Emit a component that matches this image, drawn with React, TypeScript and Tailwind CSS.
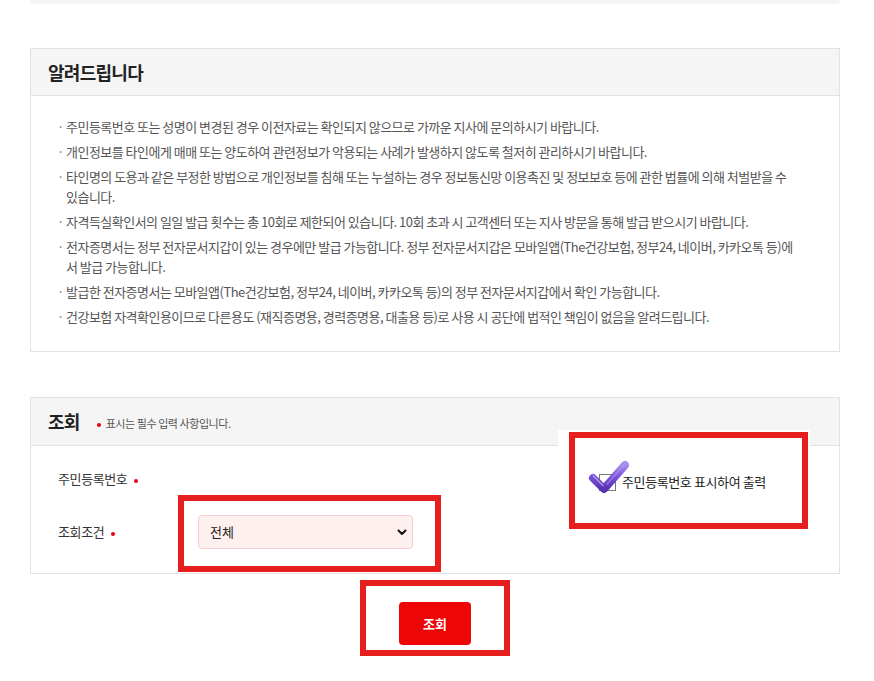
import { useState } from "react";

const notices: string[][] = [
  ["주민등록번호 또는 성명이 변경된 경우 이전자료는 확인되지 않으므로 가까운 지사에 문의하시기 바랍니다."],
  ["개인정보를 타인에게 매매 또는 양도하여 관련정보가 악용되는 사례가 발생하지 않도록 철저히 관리하시기 바랍니다."],
  [
    "타인명의 도용과 같은 부정한 방법으로 개인정보를 침해 또는 누설하는 경우 정보통신망 이용촉진 및 정보보호 등에 관한 법률에 의해 처벌받을 수",
    "있습니다.",
  ],
  ["자격득실확인서의 일일 발급 횟수는 총 10회로 제한되어 있습니다. 10회 초과 시 고객센터 또는 지사 방문을 통해 발급 받으시기 바랍니다."],
  [
    "전자증명서는 정부 전자문서지갑이 있는 경우에만 발급 가능합니다. 정부 전자문서지갑은 모바일앱(The건강보험, 정부24, 네이버, 카카오톡 등)에",
    "서 발급 가능합니다.",
  ],
  ["발급한 전자증명서는 모바일앱(The건강보험, 정부24, 네이버, 카카오톡 등)의 정부 전자문서지갑에서 확인 가능합니다."],
  ["건강보험 자격확인용이므로 다른용도 (재직증명용, 경력증명용, 대출용 등)로 사용 시 공단에 법적인 책임이 없음을 알려드립니다."],
];

function RequiredDot() {
  return <span className="inline-block w-[4px] h-[4px] rounded-full bg-[#e60012] ml-[7px] align-middle" />;
}

function PurpleCheck() {
  return (
    <svg width="44" height="38" viewBox="0 0 44 38" className="absolute left-[-13px] top-[-17px]">
      <defs>
        <linearGradient id="chk" x1="0" y1="0" x2="0" y2="1">
          <stop offset="0" stopColor="#a98ef2" />
          <stop offset="0.5" stopColor="#7850d6" />
          <stop offset="1" stopColor="#5a33b3" />
        </linearGradient>
      </defs>
      <path d="M6 20 L17 31 L38 7" fill="none" stroke="url(#chk)" strokeWidth="8" strokeLinecap="round" strokeLinejoin="round" />
      <path d="M6.5 18 L16 27.5" fill="none" stroke="#cbbcf8" strokeWidth="1.5" strokeLinecap="round" opacity="0.7" />
      <path d="M20 26 L36.5 7.5" fill="none" stroke="#b9a4f4" strokeWidth="1.5" strokeLinecap="round" opacity="0.5" />
    </svg>
  );
}

export default function App() {
  const [cond, setCond] = useState("all");
  const [showRrn, setShowRrn] = useState(true);

  return (
    <div className="relative w-[874px] h-[681px] overflow-hidden bg-white font-['Noto_Sans_CJK_KR',sans-serif] text-[#222]">
      <div className="ml-[30px] w-[810px] h-[4px] rounded-b-[6px] bg-[#f4f4f4]" />

      {/* 알려드립니다 */}
      <section className="ml-[30px] w-[810px] mt-[44px] border border-[#e2e2e2]">
        <div className="h-[47px] bg-[#f5f5f5] border-b border-[#e2e2e2] flex items-center pl-[17px]">
          <h2 className="text-[18px] font-bold tracking-[-0.04em] text-[#222]">알려드립니다</h2>
        </div>
        <ul className="pt-[21px] pb-[24px] pl-[26px] pr-[10px] flex flex-col gap-[5px]">
          {notices.map((lines, i) => (
            <li key={i} className="flex text-[13px] leading-[20px] tracking-[-0.04em] text-[#555]">
              <span className="w-[9px] shrink-0 text-[#777]">·</span>
              <span>
                {lines.map((l, j) => (
                  <span key={j} className="block whitespace-nowrap">
                    {l}
                  </span>
                ))}
              </span>
            </li>
          ))}
        </ul>
      </section>

      {/* 조회 */}
      <section className="ml-[30px] w-[810px] mt-[45px] border border-[#e2e2e2]">
        <div className="h-[48px] bg-[#f5f5f5] border-b border-[#e2e2e2] flex items-center pl-[17px]">
          <h2 className="text-[18px] font-bold tracking-[-0.04em] text-[#222]">조회</h2>
          <span className="w-[4px] h-[4px] rounded-full bg-[#e60012] ml-[17px] mt-[6px]" />
          <span className="ml-[5px] mt-[4px] text-[11px] tracking-[-0.04em] text-[#555]">표시는 필수 입력 사항입니다.</span>
        </div>
        <div className="pt-[16px] pb-[24px]">
          <div className="flex items-center h-[34px]">
            <div className="w-[167px] pl-[27px] text-[13px] tracking-[-0.03em] text-[#333]">
              주민등록번호
              <RequiredDot />
            </div>
            <label className="ml-[401px] mt-[6px] flex items-center gap-[6px] cursor-pointer">
              <span className="relative w-[17px] h-[17px] border border-[#777] bg-white">
                <input
                  type="checkbox"
                  checked={showRrn}
                  onChange={(e) => setShowRrn(e.target.checked)}
                  className="sr-only"
                />
                {showRrn && <PurpleCheck />}
              </span>
              <span className="text-[13px] tracking-[-0.03em] text-[#222]">주민등록번호 표시하여 출력</span>
            </label>
          </div>
          <div className="flex items-center h-[34px] mt-[19px]">
            <div className="w-[167px] pl-[27px] text-[13px] tracking-[-0.03em] text-[#333]">
              조회조건
              <RequiredDot />
            </div>
            <div className="relative w-[215px] h-[34px]">
              <select
                value={cond}
                onChange={(e) => setCond(e.target.value)}
                className="appearance-none w-full h-full rounded-[4px] border border-[#f7cccc] bg-[#fff0f0] pl-[11px] text-[13px] text-[#222] outline-none"
              >
                <option value="all">전체</option>
                <option value="get">취득</option>
                <option value="loss">상실</option>
              </select>
              <svg width="10" height="7" viewBox="0 0 10 7" className="absolute right-[6px] top-[14px] pointer-events-none">
                <path d="M1.5 1.5 L5 5 L8.5 1.5" fill="none" stroke="#111" strokeWidth="2" strokeLinecap="round" strokeLinejoin="round" />
              </svg>
            </div>
          </div>
        </div>
      </section>

      <div className="ml-[30px] w-[810px] flex justify-center mt-[28px]">
        <button className="w-[72px] h-[43px] rounded-[4px] bg-[#ee0505] text-white text-[13px] font-bold">조회</button>
      </div>

      {/* annotation frames */}
      <div className="absolute left-[178px] top-[495px] w-[263px] h-[77px] border-[6px] border-[#e61e1e] pointer-events-none" />
      <div className="absolute left-[558px] top-[430px] w-[252px] h-[17px] bg-white pointer-events-none" />
      <div className="absolute left-[569px] top-[432px] w-[239px] h-[97px] border-[6px] border-[#e61e1e] pointer-events-none" />
      <div className="absolute left-[360px] top-[580px] w-[150px] h-[76px] border-[6px] border-[#e61e1e] pointer-events-none" />
    </div>
  );
}
